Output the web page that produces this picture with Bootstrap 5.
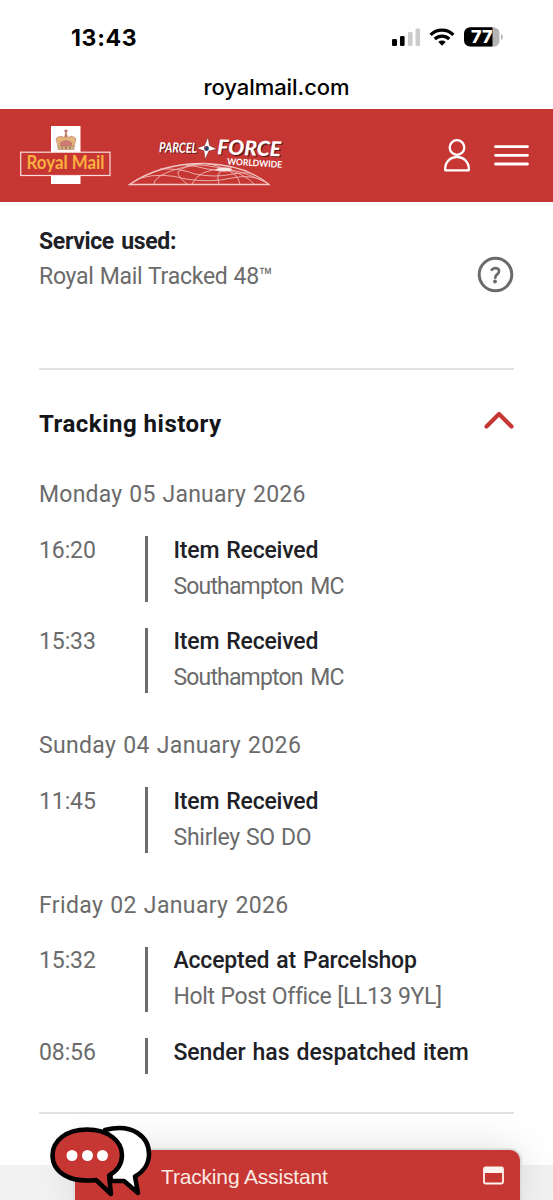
<!DOCTYPE html>
<html lang="en">
<head>
<meta charset="utf-8">
<meta name="viewport" content="width=device-width, initial-scale=1">
<title>Royal Mail tracking</title>
<link rel="stylesheet" href="https://cdn.jsdelivr.net/npm/bootstrap@5.3.0/dist/css/bootstrap.min.css">
<style>
  :root { --rm-red: #c63633; --ink: #202126; --muted: #6b6b6b; }
  body { font-family: Roboto, "Liberation Sans", sans-serif; font-size: 23px; line-height: 36px; color: var(--muted); background: #fff; }
  .screen { height: 1200px; overflow: hidden; position: relative; }
  .phone-status { height: 68px; padding: 8px 50px 0 71px; font-family: Inter, sans-serif; color: #000; }
  .clock { font-size: 23px; font-weight: 700; letter-spacing: .7px; }
  .address { height: 41px; font-family: Inter, sans-serif; font-weight: 500; font-size: 22px; letter-spacing: -.05px; color: #000; line-height: 38px; }
  .rm-header { height: 93px; background: var(--rm-red); padding: 0 24px 0 20px; }
  .details { padding: 22px 39px 0; }
  .rule { height: 2px; background: #e1e1e1; }
  .strong-label { font-weight: 700; color: var(--ink); letter-spacing: -.35px; word-spacing: 2px; }
  .service { height: 144px; }
  .history-head { height: 107px; color: #151619; }
  .history-title { font-weight: 700; font-size: 24px; letter-spacing: .5px; }
  .day { height: 59px; word-spacing: 1px; }
  .day.mon { letter-spacing: .22px; }
  .day.sun { letter-spacing: .33px; }
  .day.fri { letter-spacing: .36px; }
  .entry { margin-bottom: 26px; min-height: 36px; }
  .entry.last-of-day { margin-bottom: 35px; }
  .time { width: 106px; margin-top: -3.500px; letter-spacing: -.1px; }
  .event { border-left: 3px solid #6d6d6d; padding-left: 25.5px; }
  .event > div { margin: -3.5px 0 -3px; }
  .event-name { color: var(--ink); font-weight: 500; letter-spacing: -.2px; word-spacing: 1.5px; }
  .place { letter-spacing: -.25px; word-spacing: .5px; }
  .place.post-office { letter-spacing: -.36px; }
  .place.snug { letter-spacing: -.85px; word-spacing: 3px; }
  .assistant { left: 75px; top: 1150px; width: 445px; height: 50px; background: var(--rm-red); border-top-right-radius: 10px; color: #fbe9e2; font-family: "Liberation Sans", sans-serif; font-size: 21px; letter-spacing: -.17px; padding: 4px 16px 0 86px; box-shadow: 0 0 0 2px #dedede, 0 0 40px rgba(0,0,0,.14); }
  .page-foot { left: 0; top: 1165px; height: 35px; background: #f2f2f2; }
  .chat-icon { left: 45px; top: 1120px; }
</style>
</head>
<body>
<div class="screen">
  <div class="phone-status d-flex justify-content-between">
    <span class="clock pt-2 mt-1">13:43</span>
    <svg width="112" height="24" viewBox="0 0 112 24" style="margin-top:18px">
      <rect x="1" y="13" width="5" height="7" rx="1.3"/><rect x="9" y="10" width="4.6" height="10" rx="1.3"/>
      <rect x="17" y="6" width="4.6" height="14" rx="1.3" fill="#ccc"/><rect x="24.500" y="2.500" width="4.6" height="17.500" rx="1.300" fill="#ccc"/>
      <g fill="none" stroke="#000" stroke-width="3.2"><path d="M39.600 8.800a16 16 0 0 1 22.800 0"/><path d="M43.700 13a10.500 10.500 0 0 1 14.600 0"/></g>
      <path d="M47.300 16a5.400 5.400 0 0 1 7.400 0L51 19.700z"/>
      <path d="M79 1h24a5.500 5.500 0 0 1 5.500 5.500v8a5.500 5.500 0 0 1-5.500 5.500H79z" fill="#b5b5b5" transform="translate(0 .5)"/>
      <path d="M101.500 1.300v19.200H79a6 6 0 0 1-6-6V7.300a6 6 0 0 1 6-6z"/>
      <path d="M110 8q2 1 2 3t-2 3z" fill="#b5b5b5"/>
      <text x="80" y="17.200" font-family="Inter" font-weight="800" font-size="17.500" fill="#fff" textLength="21.500" lengthAdjust="spacingAndGlyphs">77</text>
    </svg>
  </div>
  <div class="address text-center">royalmail.com</div>

  <header class="rm-header d-flex align-items-center">
    <svg width="92" height="60" viewBox="0 0 92 60" aria-label="Royal Mail">
      <rect x="31" y="0" width="29.500" height="58" fill="#fff"/>
      <g fill="#e3b57c" stroke="#b87563" stroke-width=".6">
        <path d="M38.500 22.500 36 13q3-4.500 8-1.500L46 7l2 4.500q5-3 8 1.500L53.500 22.500z"/>
        <path d="M40 17q6-5 12 0l-1 3H41z" fill="#cf7a72"/>
        <path d="M46 3.500v8M44.300 5h3.400" stroke-width="1.500" fill="none"/>
        <rect x="38" y="20" width="16" height="3.500" fill="#d2ba86"/>
        <circle cx="42" cy="21.700" r=".8" fill="#3e7760"/><circle cx="46" cy="21.700" r=".9" fill="#a33"/><circle cx="50" cy="21.700" r=".8" fill="#3e7760"/>
      </g>
      <rect x=".7" y="26.200" width="89.300" height="23.300" fill="#c63633" stroke="#f8dede" stroke-width="1.200"/>
      <text x="6.500" y="43.200" font-family="Lato" font-weight="700" font-size="18" fill="#fbb040" textLength="78" lengthAdjust="spacingAndGlyphs">Royal Mail</text>
    </svg>
    <svg class="ms-3" width="160" height="60" viewBox="128 128 160 60" style="margin-top:5px" aria-label="Parcelforce Worldwide">
      <path d="M129.500 184.500H269Q246 165 205 163.500 161 163 129.500 184.500z" fill="none" stroke="#f1c9c6" stroke-width="1.300"/>
      <g fill="none" stroke="#eebbb8" stroke-width=".9">
        <path d="M154 184q1-12 47-20.500M187 184q-10-8-9-12 4-6 27-8.500M224 169q-25 0-32 15M224 169q-9 4-5 15M224 169q14 4 16 15M224 169q20 4 30 15M224 169q17 1 41 13M224 169q-6-4-19-5.500M224 169q-14-4-34-4.500M224 169l9-1.500"/>
        <path d="M141 178q20-6 45 1 25 4 46-1 18-4 32 3M160 169q20-1 35 5 20 4 38 0 10-2 17-1M185 165q12 1 20 3.500 12 3 24 1.500"/>
      </g>
      <ellipse cx="224" cy="169.500" rx="8" ry="2.200" fill="#fff" opacity=".7"/>
      <g transform="rotate(1 159 152)" font-family="Lato" font-style="italic" font-weight="700" font-size="14">
        <text x="160" y="153.200" fill="#651917" textLength="38" lengthAdjust="spacingAndGlyphs">PARCEL</text>
        <text x="159" y="152.300" fill="#fff" textLength="38" lengthAdjust="spacingAndGlyphs">PARCEL</text>
      </g>
      <g transform="rotate(2 216 153)" font-family="Lato" font-style="italic" font-weight="900" font-size="20.500">
        <text x="218.200" y="155.200" fill="#651917" textLength="64" lengthAdjust="spacingAndGlyphs">FORCE</text>
        <text x="217" y="154.200" fill="#fff" textLength="64" lengthAdjust="spacingAndGlyphs">FORCE</text>
      </g>
      <text transform="rotate(3.500 227 163)" x="227" y="164.500" font-family="Lato" font-weight="700" font-size="9" fill="#fff" textLength="55" lengthAdjust="spacingAndGlyphs">WORLDWIDE</text>
      <path d="M208 137 209.500 145.500 217 149 209 151 205 159.500 204 151 196.500 148 204.500 145.500z" fill="#fff" stroke="#6a1b19" stroke-width=".5"/>
      <circle cx="206.500" cy="148.500" r="2.400" fill="#28406e"/><circle cx="205" cy="147.500" r="1" fill="#c63633"/>
    </svg>
    <div class="ms-auto d-flex align-items-center">
      <svg width="28" height="34" viewBox="0 0 28 34" fill="none" stroke="#fff" stroke-width="2.300"><circle cx="14" cy="8.500" r="7.300"/><path d="M2.200 31.300v-1.500C2.200 23 7.300 18 14 18s11.800 5 11.800 11.800v1.500z" stroke-linejoin="round"/></svg>
      <svg style="margin-left:23px" width="35" height="34" viewBox="0 0 35 34"><path d="M1.500 7.700h32M1.500 16.300h32M1.500 25h32" stroke="#fff" stroke-width="2.800" stroke-linecap="round"/></svg>
    </div>
  </header>

  <main class="details">
    <section class="service d-flex justify-content-between">
      <div><div class="strong-label">Service used:</div><div class="place" style="margin-top:-1px">Royal Mail Tracked 48™</div></div>
      <svg width="37" height="37" viewBox="0 0 37 37" style="margin:31.500px .5px 0 0"><circle cx="18.500" cy="18.500" r="16.300" fill="none" stroke="#6b6b6b" stroke-width="3"/><path d="M14.700 13.700q3-2.700 6-1.100 2.600 2.200.2 5-2.600 2-2.700 4" fill="none" stroke="#6b6b6b" stroke-width="2.700" stroke-linecap="round"/><circle cx="18" cy="25.500" r="1.900" fill="#6b6b6b"/></svg>
    </section>
    <div class="rule"></div>
    <div class="history-head d-flex justify-content-between">
      <div class="history-title" style="margin-top:36px">Tracking history</div>
      <svg width="30" height="20" viewBox="0 0 30 20" style="margin-top:40px"><path d="M2.500 16.500 15 4l12.500 12.500" fill="none" stroke="#c63633" stroke-width="4.200" stroke-linecap="round" stroke-linejoin="round"/></svg>
    </div>

    <div class="day mon">Monday 05 January 2026</div>
    <div class="entry d-flex"><div class="time">16:20</div><div class="event"><div><div class="event-name">Item Received</div><div class="place snug">Southampton MC</div></div></div></div>
    <div class="entry last-of-day d-flex"><div class="time">15:33</div><div class="event"><div><div class="event-name">Item Received</div><div class="place snug">Southampton MC</div></div></div></div>

    <div class="day sun">Sunday 04 January 2026</div>
    <div class="entry last-of-day d-flex"><div class="time">11:45</div><div class="event"><div><div class="event-name">Item Received</div><div class="place">Shirley SO DO</div></div></div></div>

    <div class="day fri">Friday 02 January 2026</div>
    <div class="entry d-flex"><div class="time">15:32</div><div class="event"><div><div class="event-name">Accepted at Parcelshop</div><div class="place post-office">Holt Post Office [LL13 9YL]</div></div></div></div>
    <div class="entry d-flex"><div class="time">08:56</div><div class="event"><div><div class="event-name" style="letter-spacing:-.08px">Sender has despatched item</div></div></div></div>
    <div class="rule" style="margin-top:38px"></div>
  </main>

  <div class="page-foot position-absolute w-100"></div>
  <div class="assistant position-absolute d-flex justify-content-between">
    <span style="margin-top:5px">Tracking Assistant</span>
    <svg width="21" height="20" viewBox="0 0 21 20" style="margin-top:12px"><rect x="1" y="1.500" width="19" height="16" rx="1.500" fill="none" stroke="#fff3ed" stroke-width="1.800"/><path d="M1 2h19v5H1z" fill="#fff3ed"/></svg>
  </div>
  <svg class="chat-icon position-absolute" width="110" height="80" viewBox="0 0 110 80" stroke="#000" stroke-width="4.500" stroke-linejoin="round">
    <path d="M60 10C88 3 104 17 104 34c0 10-6 18-14 22.500L93 73 79 61H66z" fill="#fff"/>
    <path d="M42 9.500c21 0 35 11.500 35 25.500 0 9-5 16-13 20.500L66 74 51 60c-27 3-43.500-8-43.500-25C7.500 21 21 9.500 42 9.500z" fill="#c63633"/>
    <g fill="#fff" stroke="none"><circle cx="27" cy="35.500" r="5.500"/><circle cx="42.500" cy="35.500" r="5.500"/><circle cx="57.500" cy="35.500" r="5.500"/></g>
  </svg>
</div>
<script src="https://cdn.jsdelivr.net/npm/bootstrap@5.3.0/dist/js/bootstrap.bundle.min.js"></script>
</body>
</html>
